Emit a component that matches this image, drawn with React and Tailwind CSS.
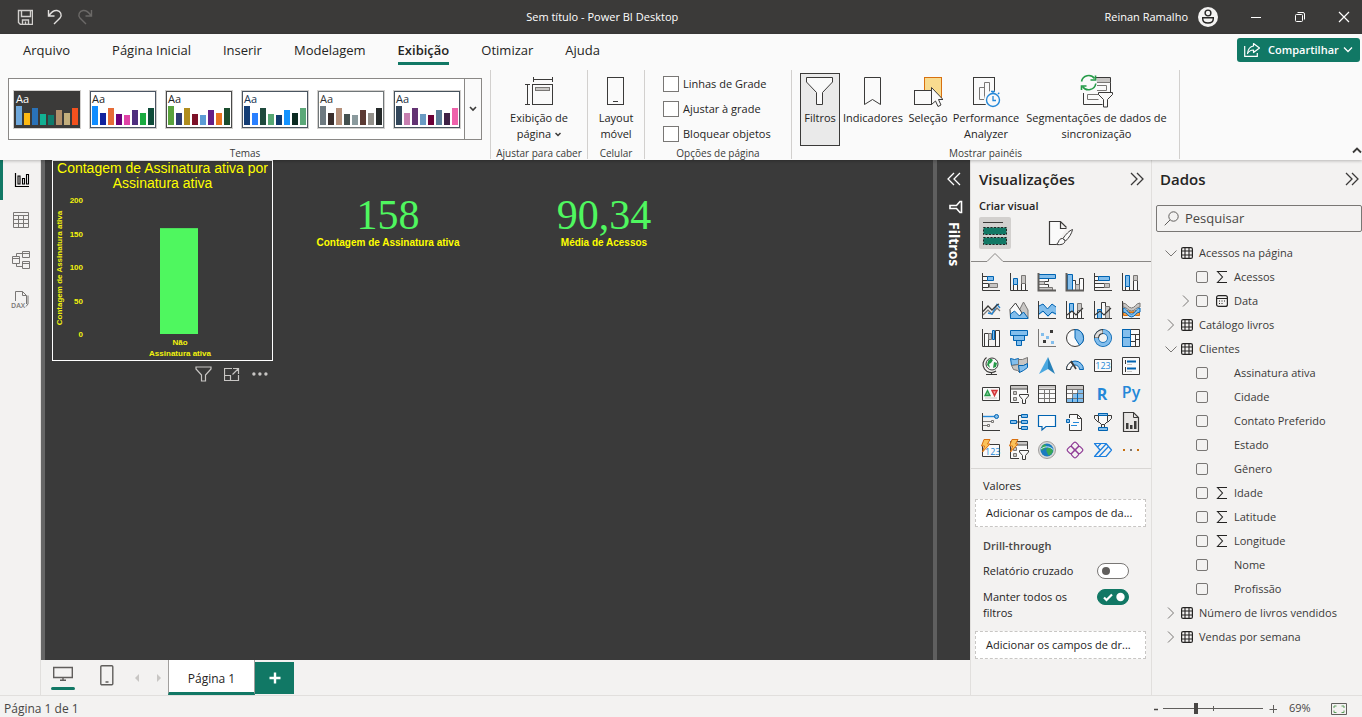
import React from 'react';

const K = '#3b3a39';
const B = '#0063b1';
const BF = '#83beec';
const G = '#797775';
const GF = '#c8c6c4';
const W = '#fafafa';

function Svg({ w = 20, h = 20, className = '', children }) {
  return (
    <svg
      width={w}
      height={h}
      viewBox={`0 0 ${w} ${h}`}
      fill="none"
      className={`shrink-0 ${className}`}
      aria-hidden="true"
    >
      {children}
    </svg>
  );
}

/* ---------- Title bar ---------- */

function TitleBar() {
  return (
    <header className="flex h-[34px] shrink-0 items-center bg-[#3b3a39] text-[11px] text-white">
      <div className="flex w-[100px] items-center gap-3.5 pl-[17px]">
        <button aria-label="Salvar">
          <Svg w={16} h={16}>
            <path d="M1.5 1.5h14v14h-12l-2-2z" stroke="#d2d0ce" strokeWidth="1.4" />
            <path d="M4.5 1.5v6h9v-6M5.5 15v-4h6v4M8.5 12.5v2.5" stroke="#d2d0ce" strokeWidth="1.4" />
          </Svg>
        </button>
        <button aria-label="Desfazer">
          <Svg w={16} h={16}>
            <path d="M1.5 1v6h6M2 6.5C4 3.5 7 1.2 10 1.5C13.5 2 15.5 6 13 9L7 15" stroke="#e1dfdd" strokeWidth="1.4" />
          </Svg>
        </button>
        <button aria-label="Refazer">
          <Svg w={16} h={16}>
            <path d="M14.5 1v6h-6M14 6.5C12 3.5 9 1.2 6 1.5C2.5 2 .5 6 3 9L9 15" stroke="#6b6967" strokeWidth="1.4" />
          </Svg>
        </button>
      </div>
      <h1 className="flex-1 text-center">Sem título - Power BI Desktop</h1>
      <div className="flex items-center pr-3">
        <span>Reinan Ramalho</span>
        <Svg w={20} h={20} className="ml-2.5">
          <circle cx="10" cy="10" r="10" fill="#f3f2f1" />
          <circle cx="10" cy="6" r="2.9" stroke="#252423" strokeWidth="1.4" />
          <path d="M4.7 10.7h10.600v1c0 2.800-2.200 4.300-5.300 4.300s-5.300-1.500-5.300-4.300z" stroke="#252423" strokeWidth="1.4" />
        </Svg>
        <button aria-label="Minimizar" className="ml-8">
          <Svg w={12} h={12}><path d="M1 6.5h10" stroke="#fff" /></Svg>
        </button>
        <button aria-label="Restaurar" className="ml-8">
          <Svg w={12} h={12}>
            <rect x="1.5" y="3.5" width="7" height="7" rx="1" stroke="#fff" />
            <path d="M3.5 1.5h5.500a1.500 1.500 0 0 1 1.500 1.500v5.500" stroke="#fff" />
          </Svg>
        </button>
        <button aria-label="Fechar" className="ml-8">
          <Svg w={12} h={12}><path d="M1 1l10 10M11 1L1 11" stroke="#fff" strokeWidth="1.2" /></Svg>
        </button>
      </div>
    </header>
  );
}

/* ---------- Ribbon ---------- */

const TABS = ['Arquivo', 'Página Inicial', 'Inserir', 'Modelagem', 'Exibição', 'Otimizar', 'Ajuda'];

const THEMES = [
  { dark: true, ink: '#ffffff', edge: '#3b3a39', bars: ['#6fa8dc', '#fdb913', '#2a72b8', '#12b093', '#0f7b6c', '#b18f6a', '#c3ae7c', '#f4511e'] },
  { ink: '#252423', edge: '#4b5563', bars: ['#118dff', '#12239e', '#e66c37', '#6b007b', '#e044a7', '#4f2f7f', '#1aab40', '#0f4c3a'] },
  { ink: '#252423', edge: '#4a4a4a', bars: ['#5aa23c', '#2f3c73', '#b08d1e', '#7d1128', '#5b9bd5', '#641e87', '#e8731f', '#1b4d2e'] },
  { ink: '#16324f', edge: '#4a5560', bars: ['#153e75', '#2a80ff', '#1f4a3d', '#57a773', '#0f3a6d', '#1493ff', '#0c2b22', '#5ba878'] },
  { ink: '#333333', edge: '#707678', bars: ['#6e7a80', '#3a2e2c', '#b5907a', '#44504f', '#8a9a9d', '#5c3a33', '#93908a', '#262a2a'] },
  { ink: '#26333f', edge: '#46525c', bars: ['#33475b', '#c77fb0', '#633372', '#6a9bc3', '#6b0036', '#5a7d98', '#3f2145', '#ee62ab'] },
];
const BAR_HEIGHTS = [19, 12, 17, 11, 10, 15, 12, 17];

function ThemeThumb({ theme }) {
  return (
    <button aria-label="Tema" className="outline outline-1 outline-[#d2d0ce]">
      <svg width="66" height="37" viewBox="0 0 66 37" className="block">
        <rect x=".5" y=".5" width="65" height="36" fill={theme.dark ? '#3b3a39' : '#ffffff'} stroke={theme.edge} />
        <text x="2" y="12" fontSize="11" fill={theme.ink}>Aa</text>
        {theme.bars.map((c, i) => (
          <rect key={i} x={2 + i * 8} y={34 - BAR_HEIGHTS[i]} width="6" height={BAR_HEIGHTS[i]} fill={c} />
        ))}
      </svg>
    </button>
  );
}

function Group({ label, className = '', children }) {
  return (
    <section className={`flex h-[89px] shrink-0 flex-col border-r border-[#d2d0ce] ${className}`}>
      <div className="flex flex-1 justify-center">{children}</div>
      <h2 className="h-[12px] text-center text-[10px] leading-[12px] whitespace-nowrap text-[#3b3a39]">{label}</h2>
    </section>
  );
}

function BigButton({ icon, lines, active, className = '' }) {
  return (
    <button
      className={`flex h-[73px] flex-col items-center border pt-[3px] leading-[16px] whitespace-nowrap ${
        active ? 'border-[#3b3a39] bg-[#eaeaea]' : 'border-transparent'
      } ${className}`}
    >
      <span className="flex h-[33px] items-start">{icon}</span>
      {lines.map((l, i) => (
        <span key={i}>{l}</span>
      ))}
    </button>
  );
}

const PageViewIcon = (
  <Svg w={30} h={30}>
    <path d="M9 2.5h20M9.5 0v5M28.5 0v5M3.5 8v20M1 7.5h5M1 27.5h5" stroke={K} />
    <rect x="8.5" y="7.5" width="20" height="20" stroke={K} />
    <rect x="11.5" y="10.5" width="14" height="3" fill={GF} stroke={G} />
  </Svg>
);
const MobileIcon = (
  <Svg w={18} h={30}>
    <rect x=".5" y=".5" width="16" height="27" stroke={K} />
    <path d="M6 24.5h5" stroke={K} />
  </Svg>
);
const FilterBigIcon = (
  <Svg w={28} h={30}>
    <path d="M.5 .5h26v4.500L16.500 15.500v12h-6v-12L.5 5z" fill={W} stroke={K} />
  </Svg>
);
const BookmarkIcon = (
  <Svg w={18} h={30}>
    <path d="M.5 .5h16v27l-8-5-8 5z" fill={W} stroke={K} />
  </Svg>
);
const SelectionIcon = (
  <Svg w={30} h={32}>
    <rect x="11.5" y=".5" width="17" height="20" fill="#f8db8f" stroke="#d8700f" />
    <rect x="1.5" y="13.5" width="17" height="14" fill={W} stroke={K} />
    <path d="M18.5 10.500v17l4-3.500 2.500 5.500 3-1.500-2.500-5.500h4.500z" fill={W} stroke={K} />
  </Svg>
);
const PerfIcon = (
  <Svg w={30} h={32}>
    <rect x="2.5" y=".5" width="21" height="27" stroke={K} fill={W} />
    <path d="M8.5 10.5h5v12h-5zM13.5 5.5h5v17h-5z" fill={W} stroke={G} />
    <circle cx="22" cy="22.5" r="9" fill={W} />
    <circle cx="22" cy="23" r="6.5" stroke="#2488d8" strokeWidth="1.4" />
    <path d="M22 19v4.500h3M20 14.500h4M22 14.500v2M27 17l1.300-1.300" stroke="#2488d8" strokeWidth="1.3" />
  </Svg>
);
const SyncSlicerIcon = (
  <Svg w={36} h={32} className="overflow-visible">
    <path d="M4.5 16v11.500h19M31.500 15V.5H15" stroke={K} />
    <rect x="17" y="1" width="14" height="4" fill={GF} />
    <path d="M17 5.500h14.500M18 8.500h9.500v5H18M22 17.500H8.500v5h11" stroke={G} />
    <path d="M19.500 15.500h14v2l-5 5v7.500h-4v-7.500l-5-5z" fill={W} stroke={K} />
    <circle cx="9.5" cy="6" r="8.5" fill={W} />
    <path d="M2.500 4.500A7.300 7.300 0 0 1 15.500 1.500M16.800 6.500A7.300 7.300 0 0 1 3.500 9.500" stroke="#259b48" strokeWidth="1.6" />
    <path d="M16.500 -1.500v4.500h-5M2.500 13v-4h5" stroke="#259b48" strokeWidth="1.6" />
  </Svg>
);

function Ribbon() {
  return (
    <div className="relative z-10 flex h-[126px] shrink-0 flex-col bg-[#fafafa] text-[#252423] shadow-[0_1px_3px_rgba(0,0,0,0.25)]">
      <div className="flex h-[36px] items-start justify-between pr-0.5">
        <nav className="flex text-[13px]">
          {TABS.map((t, i) => (
            <button
              key={t}
              className={`flex h-[31px] flex-col items-center px-4 pt-[6px] leading-[20px] ${i === 0 ? 'mr-2.5 ml-[7px]' : ''} ${
                t === 'Exibição' ? 'font-semibold' : ''
              }`}
            >
              {t}
              {t === 'Exibição' && <span className="mt-[2px] h-[3px] w-full bg-[#117865]" />}
            </button>
          ))}
        </nav>
        <button className="mt-1 flex h-[24px] w-[123px] items-center rounded-[3px] bg-[#117865] pl-[7px] text-[11px] font-semibold text-white">
          <Svg w={16} h={16}>
            <path d="M.7 4v10.300h12.600V11" stroke="#fff" strokeWidth="1.2" />
            <path d="M9.5 1.5l6 4.500-6 4.500V8C7 8 5 9 3.500 11.500 4 7 6 4.500 9.500 4z" stroke="#fff" strokeWidth="1.2" strokeLinejoin="round" />
          </Svg>
          <span className="ml-2">Compartilhar</span>
          <Svg w={10} h={8} className="ml-1"><path d="M1 1.5l4 4 4-4" stroke="#fff" strokeWidth="1.3" /></Svg>
        </button>
      </div>

      <div className="flex items-start text-[11px]">
        <Group label="Temas" className="w-[491px]">
          <div className="mt-2 flex h-[62px] border border-[#8a8886] bg-white">
            <div className="flex items-center gap-2.5 pr-[4px] pl-[5px]">
              {THEMES.map((t, i) => (
                <ThemeThumb key={i} theme={t} />
              ))}
            </div>
            <button aria-label="Mais temas" className="flex w-[17px] items-center justify-center border-l border-[#8a8886] bg-[#fafafa]">
              <Svg w={8} h={6}><path d="M1 1l3 3 3-3" stroke={K} strokeWidth="1.6" /></Svg>
            </button>
          </div>
        </Group>
        <Group label="Ajustar para caber" className="w-[97px]">
          <BigButton
            className="mt-[3px]"
            icon={PageViewIcon}
            lines={[
              'Exibição de',
              <span className="flex items-center gap-1">
                página
                <Svg w={6} h={5}><path d="M.5 1L3 3.500 5.500 1" stroke={K} strokeWidth="1.5" /></Svg>
              </span>,
            ]}
          />
        </Group>
        <Group label="Celular" className="w-[57px]">
          <BigButton className="mt-[3px]" icon={MobileIcon} lines={['Layout', 'móvel']} />
        </Group>
        <Group label="Opções de página" className="w-[147px]">
          <div className="flex flex-1 flex-col gap-[9px] pt-[6px] pl-[18px]">
            {['Linhas de Grade', 'Ajustar à grade', 'Bloquear objetos'].map((t) => (
              <label key={t} className="flex h-4 items-center gap-1 whitespace-nowrap">
                <input type="checkbox" className="size-4 shrink-0 appearance-none border border-[#797775] bg-white" />
                {t}
              </label>
            ))}
          </div>
        </Group>
        <Group label="Mostrar painéis" className="w-[388px]">
          <div className="mt-[3px] flex flex-1 gap-1 pl-2">
            <BigButton active className="w-10" icon={FilterBigIcon} lines={['Filtros']} />
            <BigButton className="w-[58px]" icon={BookmarkIcon} lines={['Indicadores']} />
            <BigButton className="w-[44px]" icon={SelectionIcon} lines={['Seleção']} />
            <BigButton className="w-[64px]" icon={PerfIcon} lines={['Performance', 'Analyzer']} />
            <BigButton className="w-[149px]" icon={SyncSlicerIcon} lines={['Segmentações de dados de', 'sincronização']} />
          </div>
        </Group>
        <button aria-label="Recolher faixa de opções" className="mt-[76px] ml-auto">
          <Svg w={10} h={8}><path d="M1 6.500l4-4 4 4" stroke={K} strokeWidth="1.8" /></Svg>
        </button>
      </div>
    </div>
  );
}

/* ---------- Left navigation ---------- */

function LeftNav() {
  return (
    <nav className="flex w-[41px] shrink-0 flex-col border-r border-[#e1dfdd] bg-[#f3f2f1]">
      <button aria-label="Exibição de relatório" className="flex h-10 items-center justify-center border-l-3 border-[#117865]">
        <Svg w={16} h={16}>
          <path d="M1.5 1v13.500H15" stroke="#000" strokeWidth="1.2" />
          <path d="M4 4h2v8H4zM8.500 6.500h2V12h-2zM12.500 2.500h2V12h-2z" stroke="#000" strokeWidth="1.1" />
        </Svg>
      </button>
      <button aria-label="Exibição de tabela" className="flex h-10 items-center justify-center pl-0.5">
        <Svg w={18} h={16}>
          <path d="M1.5 .5h15v15h-15zM1.500 3.500h15M1.500 7.500h15M1.500 11.500h15M6.500 3.500v12M11.500 3.500v12" stroke={G} />
        </Svg>
      </button>
      <button aria-label="Exibição de modelo" className="flex h-10 items-center justify-center pl-0.5">
        <Svg w={20} h={20}>
          <path d="M1.500 6.500h7v7h-7zM11.500 1.500h7v6h-7zM11.500 11.500h7v7h-7zM1.500 8.500h7M11.500 3.500h7M11.500 13.500h7M11 3.500H5.500v3M5.500 13.500v3H11" stroke={G} />
        </Svg>
      </button>
      <button aria-label="Exibição de consulta DAX" className="flex h-10 items-center justify-center">
        <Svg w={20} h={20}>
          <path d="M5.500 11V1.500h7l4 4V14M12.500 1.500v4h4M18 5.500v8.500l-2 2.500" stroke={G} />
          <text x="1" y="18" fontSize="7" fontWeight="600" fill={G}>DAX</text>
        </Svg>
      </button>
    </nav>
  );
}

/* ---------- Report canvas ---------- */

function BarChart() {
  const ticks = [200, 150, 100, 50, 0];
  return (
    <figure className="absolute top-0 left-[7px] h-[201px] w-[221px] border border-white font-['Liberation_Sans',sans-serif]">
      <figcaption className="text-center text-[14px] leading-[15px] text-[#ffff00]">
        Contagem de Assinatura ativa por Assinatura ativa
      </figcaption>
      <svg width="219" height="169" viewBox="0 0 219 169" className="block" fill="#f2f20d" fontSize="8" fontWeight="bold">
        {ticks.map((t) => (
          <text key={t} x="30" y={146 - (t / 200) * 134} textAnchor="end">{t}</text>
        ))}
        <text transform="translate(9 77) rotate(-90)" textAnchor="middle">Contagem de Assinatura ativa</text>
        <rect x="107" y={143 - (158 / 200) * 134} width="38" height={(158 / 200) * 134} fill="#4ff75f" />
        <text x="127" y="154" textAnchor="middle">Não</text>
        <text x="127" y="165" textAnchor="middle">Assinatura ativa</text>
      </svg>
    </figure>
  );
}

function Card({ value, label, className }) {
  return (
    <div className={`absolute flex flex-col items-center whitespace-nowrap ${className}`}>
      <span className="font-['Liberation_Serif',serif] text-[42px] leading-[42px] text-[#4ff75f]">{value}</span>
      <span className="font-['Liberation_Sans',sans-serif] text-[10px] leading-[14px] font-bold text-[#ffff00]">{label}</span>
    </div>
  );
}

function Canvas() {
  return (
    <main className="relative min-w-0 flex-1 border-l-4 border-[#666666] bg-[#3a3a3a]">
      <BarChart />
      <div className="absolute top-[206px] left-[150px] flex gap-3">
        <button aria-label="Filtros do visual">
          <Svg w={17} h={16}><path d="M1 1h15v2l-5.500 6v6h-4V9L1 3z" stroke="#c8c6c4" strokeWidth="1.2" /></Svg>
        </button>
        <button aria-label="Modo de foco">
          <Svg w={16} h={16}>
            <path d="M8 2.500H.5v12h14V9M.5 9.500h6v5M9 2.500h5.500V8M14.500 2.500L8.500 8.500" stroke="#c8c6c4" strokeWidth="1.2" />
          </Svg>
        </button>
        <button aria-label="Mais opções">
          <Svg w={17} h={16}>
            <circle cx="1.900" cy="8" r="1.700" fill="#c8c6c4" />
            <circle cx="7.900" cy="8" r="1.700" fill="#c8c6c4" />
            <circle cx="13.900" cy="8" r="1.700" fill="#c8c6c4" />
          </Svg>
        </button>
      </div>
      <Card value="158" label="Contagem de Assinatura ativa" className="top-[34px] left-[243px] w-[200px]" />
      <Card value="90,34" label="Média de Acessos" className="top-[34px] left-[459px] w-[200px]" />
    </main>
  );
}

function Chevrons({ left, color = K }) {
  return (
    <Svg w={14} h={14}>
      <path d={left ? 'M7 1L1 7l6 6M13 1L7 7l6 6' : 'M1 1l6 6-6 6M7 1l6 6-6 6'} stroke={color} strokeWidth="1.3" />
    </Svg>
  );
}

function FiltersStrip() {
  return (
    <aside className="flex w-[37px] shrink-0 flex-col items-center gap-3.5 border-l-4 border-[#5f5f5f] bg-[#3a3a3a] pt-3">
      <button aria-label="Expandir filtros"><Chevrons left color="#ffffff" /></button>
      <Svg w={14} h={14} className="ml-1">
        <path d="M12.500 1.500v11h-1.500L7.500 8.500H1v-3h6.500L11 1.500z" stroke="#fff" strokeWidth="1.6" />
      </Svg>
      <h2 className="-mt-1.5 text-[14px] leading-[16px] font-bold text-white [writing-mode:vertical-rl]">Filtros</h2>
    </aside>
  );
}

/* ---------- Visualizations gallery ---------- */

const AX = <path d="M1.5 1v17.500H19" stroke={K} />;
const TXT = { fontFamily: 'Open Sans, sans-serif', fill: '#2488d8' };
const BOLT = <path d="M3 -.5h6L6.500 4H9L1.500 12 3.500 6H.5z" fill="#fbc25a" stroke="#d8700f" />;
const SLICER = (
  <>
    <path d="M10 18.500H1.500v-17h17V9" fill={W} stroke={K} />
    <rect x="2" y="2" width="16" height="2.5" fill={GF} />
    <path d="M2 5h16.500" stroke={K} />
    <path d="M4.500 7.500h3v3h-3zM4.500 13.500h3v3h-3z" fill={GF} stroke={G} />
    <path d="M10.500 10.500h9v1.500l-3 3.500v4h-3v-4l-3-3.500z" fill={W} stroke={K} />
  </>
);

const VISUALS = [
  ['Gráfico de barras empilhadas', <>
    <path d="M1.500 4.500h5v4h-5zM1.500 11.500h6v4h-6z" fill={W} stroke={K} />
    <path d="M6.500 4.500h6v4h-6z" fill={BF} stroke={B} />
    <path d="M8.500 11.500h8v4h-8z" fill={GF} stroke={G} />{AX}</>],
  ['Gráfico de colunas empilhadas', <>
    <path d="M4.500 12.500h4v6h-4zM12.500 11.500h4v7h-4z" fill={W} stroke={K} />
    <path d="M4.500 6.500h4v6h-4z" fill={BF} stroke={B} />
    <path d="M12.500 3.500h4v8h-4z" fill={GF} stroke={G} />{AX}</>],
  ['Gráfico de barras clusterizado', <>
    <path d="M1.500 6.500h10v3h-10zM1.500 12.500h10v5h-10z" fill={W} stroke={K} />
    <path d="M1.500 9.500h6v3h-6zM1.500 15.500h14v3h-14z" fill={GF} stroke={G} />
    <path d="M1.500 2.500h17v4h-17z" fill={BF} stroke={B} />
    <path d="M1.500 1v17.500H19" stroke="#605e5c" strokeWidth="2" /></>],
  ['Gráfico de colunas clusterizado', <>
    <path d="M7.500 8.500h3v10h-3zM14.500 6.500h4v12h-4z" fill={W} stroke={K} />
    <path d="M10.500 12.500h4v6h-4z" fill={GF} stroke={G} />
    <path d="M2.500 2.500h5v16h-5z" fill={BF} stroke={B} />
    <path d="M1.500 1v17.500H19" stroke="#605e5c" strokeWidth="2" /></>],
  ['Gráfico de barras 100%', <>
    <path d="M1.500 4.500h4v4h-4zM1.500 11.500h10v4h-10z" fill={W} stroke={K} />
    <path d="M5.500 4.500h11v4h-11z" fill={BF} stroke={B} />
    <path d="M11.500 11.500h5v4h-5z" fill={GF} stroke={G} />{AX}</>],
  ['Gráfico de colunas 100%', <>
    <path d="M4.500 14.500h4v4h-4zM12.500 8.500h4v10h-4z" fill={W} stroke={K} />
    <path d="M4.500 3.500h4v11h-4z" fill={BF} stroke={B} />
    <path d="M12.500 3.500h4v5h-4z" fill={GF} stroke={G} />{AX}</>],

  ['Gráfico de linhas', <>
    <path d="M2 15l5-5 4 4 5-6 3 3" stroke={G} strokeWidth="1.2" />
    <path d="M7 13l4 1 5-9.500 3 3.500" stroke="#2488d8" strokeWidth="1.3" />
    <path d="M2 11.500l5-5.500 4 4 5-5 2-1" stroke={K} strokeWidth="1.3" />{AX}</>],
  ['Gráfico de área', <>
    <path d="M14.500 2l4.500 8v8.500H6z" fill={GF} stroke={G} />
    <path d="M1 9.500L6.500 3 13 13l-4 5H1.500z" fill={W} stroke={K} />
    <path d="M1.500 14l4-3 5 5 4-4 4.500 6v.5h-17.500z" fill={BF} stroke={B} /></>],
  ['Gráfico de áreas empilhadas', <>
    <path d="M2 6l4-2 4.500 5L15 4l4 3v8l-4-2-4 4-5-5-4 3z" fill={BF} />
    <path d="M2 6l4-2 4.500 5L15 4l4 3M2 14l4-3 5 5 4-4 4 2" stroke={B} />{AX}</>],
  ['Linhas e colunas empilhadas', <>
    <path d="M4.500 9.500h4v9h-4zM12.500 9.500h4v9h-4z" fill={W} stroke={K} />
    <path d="M4.500 3.500h4v8h-4z" fill={BF} stroke={B} />
    <path d="M12.500 3.500h4v7h-4z" fill={GF} stroke={G} />
    <path d="M2 15l5-4 4 4 7-7" stroke={K} strokeWidth="1.2" />{AX}</>],
  ['Linhas e colunas clusterizadas', <>
    <path d="M8.500 2.500h4v16h-4z" fill={W} stroke={K} />
    <path d="M12.500 6.500h4v12h-4z" fill={GF} stroke={G} />
    <path d="M4.500 9.500h4v9h-4z" fill={BF} stroke={B} />
    <path d="M2 15l5-4 4 4 7-7" stroke={K} strokeWidth="1.2" />{AX}</>],
  ['Gráfico de faixas', <>
    <path d="M2.500 10.500h4v5h-4zM14.500 10.500h4v5h-4zM8 9.500h5v3H8z" fill="#f2a04a" stroke="#d8700f" />
    <path d="M2 8c4 0 5 6 8.500 6S15 8 19 8v4c-4 0-5 5-8.500 5S6 12 2 12z" fill={BF} stroke={B} />
    <path d="M2 3c4 0 5 5 8.500 5S15 3 19 3v4c-4 0-5 4-8.500 4S6 7 2 7z" fill={GF} stroke={G} />{AX}</>],

  ['Gráfico de cascata', <>
    <path d="M3.500 5.500h4v13h-4zM14.500 2.500h4v16h-4z" fill={W} stroke={K} />
    <path d="M7.500 5.500h3v6h-3z" fill={GF} stroke={G} />
    <path d="M11.500 2.500h2v9h-2z" fill={BF} stroke={B} />{AX}</>],
  ['Funil', <>
    <path d="M1.500 2.500h17v5h-17zM4.500 7.500h11v5h-11zM7.500 12.500h5v5h-5z" fill={BF} stroke={B} /></>],
  ['Gráfico de dispersão', <>
    <path d="M13 2h3v3h-3zM6 12h3v3H6z" fill={K} />
    <path d="M4 5h3v3H4zM9 8h3v3H9zM14 13h3v3h-3z" fill={BF} />
    <path d="M1.500 1v17.500H19" stroke={G} /></>],
  ['Gráfico de pizza', <>
    <circle cx="10" cy="10" r="8.5" fill={W} stroke={K} />
    <path d="M10 1.500A8.500 8.500 0 0 1 14.500 17.200L10 10z" fill={BF} stroke={B} /></>],
  ['Gráfico de rosca', <>
    <circle cx="10" cy="10" r="6.5" stroke={B} strokeWidth="5" />
    <circle cx="10" cy="10" r="6.5" stroke={BF} strokeWidth="3.4" />
    <path d="M3.500 10A6.500 6.500 0 0 1 10 3.500" stroke={K} strokeWidth="5" />
    <path d="M3.500 9.500A6.500 6.500 0 0 1 9.500 3.500" stroke="#e1dfdd" strokeWidth="3.2" /></>],
  ['Treemap', <>
    <path d="M1.500 1.500h17v17h-17z" fill={W} stroke={K} />
    <path d="M9.500 6.500h9M14.500 6.500v12M9.500 13.500h5M14.500 11.500h4" stroke={K} />
    <path d="M1.500 1.500h8v8h-8zM1.500 9.500h8v9h-8z" fill={BF} stroke={B} /></>],

  ['Mapa', <>
    <circle cx="11" cy="8" r="6" fill={W} stroke={K} />
    <path d="M7 5c2-3 4-2 5-1l-2 3-2 1 1 4-3-3zM13 6l3 1-1 4-3 1z" fill="#259b48" />
    <path d="M5.500 1.500a8 8 0 0 0 9.500 13.500M10.500 16v2.500M5 18.500h11" stroke={K} strokeWidth="1.2" /></>],
  ['Mapa coroplético', <>
    <path d="M1.500 2.500l4 1 4-1v6l-7 1z" fill={BF} stroke={B} />
    <path d="M9.500 3.500h4l5-2v6l-4 2h-5z" fill={GF} stroke={G} />
    <path d="M2.500 9.500l7-1 1 8-2-2-4-1z" fill={GF} stroke={G} />
    <path d="M9.500 9.500h5l4-2v4l-4 3-4 2z" fill={BF} stroke={B} /></>],
  ['Mapa do Azure', <>
    <path d="M11 1L2 18l9-5z" fill="#4aa8e0" />
    <path d="M11 1l7 17-7-5z" fill="#2680b8" /></>],
  ['Medidor', <>
    <path d="M1.500 13.500a8.500 8.500 0 0 1 17 0h-4a4.500 4.500 0 0 0-9 0z" fill={BF} stroke={B} />
    <path d="M1.500 13.500A8.500 8.500 0 0 1 6 6l2 3.500a4.500 4.500 0 0 0-2.500 4z" fill={W} stroke={K} />
    <path d="M6 5l5 8" stroke={K} strokeWidth="1.6" /></>],
  ['Cartão', <>
    <path d="M1.500 3.500h17v12h-17z" fill={W} stroke={K} />
    <text x="10" y="13" fontSize="9" textAnchor="middle" {...TXT}>123</text></>],
  ['Cartão de várias linhas', <>
    <path d="M1.500 1.500h17v17h-17z" fill={W} stroke={K} />
    <path d="M4.500 4v4M4.500 11v5" stroke={K} />
    <path d="M6 5.500h9M6 12.500h9" stroke={B} strokeWidth="2" />
    <path d="M6 8.500h5M6 15.500h5" stroke={GF} /></>],

  ['KPI', <>
    <path d="M1.500 3.500h17v13h-17z" fill={W} stroke={K} />
    <path d="M4 11.500l2.500-5 2.500 5z" fill="#7fc795" stroke="#259b48" strokeWidth="1.3" />
    <path d="M11 6.500h5l-2.500 5z" fill="#f6a5a5" stroke="#d13438" strokeWidth="1.5" />
    <path d="M4 14h12" stroke={GF} /></>],
  ['Segmentação de dados', SLICER],
  ['Tabela', <>
    <path d="M1.500 1.500h17v17h-17z" fill={W} stroke={K} />
    <rect x="2" y="2" width="16" height="2.5" fill={GF} />
    <path d="M1.500 5.500h17M1.500 9.500h17M1.500 14.500h17M7.500 5v13M12.500 5v13" stroke={G} />
    <path d="M1.500 1.500h17v17h-17z" stroke={K} /></>],
  ['Matriz', <>
    <path d="M1.500 1.500h17v17h-17z" fill={W} />
    <path d="M13 5h5.500v13.500H2V14h5v-4h6z" fill={BF} />
    <path d="M2 2h16v3H2z" fill={GF} />
    <path d="M1.500 5.500h17M1.500 9.500h17M1.500 14.500h17M7.500 5v13M12.500 5v13" stroke={G} />
    <path d="M7.500 18v-4M12.500 18V9" stroke={B} />
    <path d="M1.500 1.500h17v17h-17z" stroke={K} /></>],
  ['Visual do script R', <text x="9" y="16" fontSize="16" fontWeight="bold" textAnchor="middle" {...TXT}>R</text>],
  ['Visual do Python', <text x="10" y="14" fontSize="16" fontWeight="600" textAnchor="middle" {...TXT}>Py</text>],

  ['Influenciadores principais', <>
    <path d="M2 4.500h12" stroke="#2488d8" strokeWidth="1.4" />
    <circle cx="15.5" cy="4.5" r="2" fill={BF} stroke={B} />
    <path d="M2 9.500h8M2 13.500h4" stroke={G} />
    <path d="M10.500 8.500h2v2h-2zM6.500 12.500h2v2h-2z" stroke={G} />
    <path d="M1.500 1v17.500H19" stroke={K} /></>],
  ['Árvore hierárquica', <>
    <path d="M7 10h6M9.500 3.500v13M9.500 3.500H13M9.500 16.500H13" stroke={K} />
    <path d="M1.500 8.500h6v3h-6zM12.500 2.500h6v3h-6zM12.500 8.500h6v3h-6zM12.500 14.500h6v3h-6z" fill={BF} stroke={B} /></>],
  ['P e R', <path d="M1.500 3.500h17v11H9L5 18v-3.500H1.500z" fill={W} stroke={B} strokeWidth="1.2" />],
  ['Narrativa inteligente', <>
    <path d="M4.500 6V2.500h8l4 4v12H4.500V12" fill={W} stroke={K} />
    <path d="M12.500 2.500v4h4" stroke={K} />
    <path d="M1.500 7.500h3v3h-3z" fill={BF} stroke={B} />
    <path d="M8 10.500h6M6 13.500h6" stroke="#2488d8" /></>],
  ['Metas', <>
    <path d="M5.500 1.500h9v8l-3 3h-3l-3-3z" fill={W} stroke={K} />
    <path d="M5 3.500H1.500v3l4 4M15 3.500h3.500v3l-4 4M8.500 12.500v3M11.500 12.500v3" stroke={K} />
    <path d="M5.500 1.500h9v2h-9zM5.500 15.500h9v3h-9z" fill={BF} stroke={B} /></>],
  ['Relatório paginado', <>
    <path d="M2.500 .5h10l5 5v14h-15z" fill="#e8e6e4" stroke={K} strokeWidth="1.2" />
    <path d="M12.500 .5v5h5" stroke={K} />
    <path d="M5 11h2.500v6H5zM9 13h2.500v4H9zM13 9h2.500v8H13z" fill={K} /></>],

  ['Cartão (novo)', <>
    <path d="M1.500 4.500h17v12h-17z" fill={W} stroke={K} />
    <text x="4" y="15" fontSize="9" {...TXT}>123</text>{BOLT}</>],
  ['Segmentação de dados (nova)', <>{SLICER}{BOLT}</>],
  ['ArcGIS', <>
    <circle cx="10" cy="10" r="8.5" fill="#d9d9d9" stroke="#a19f9d" />
    <circle cx="10" cy="10" r="6.5" fill="#1a7bbf" />
    <path d="M6 5c2-1 4 0 3 2s-3 2-4 4c-1-2-1-4 1-6zM10 8c3-1 5 0 6 3-1 3-3 5-5 4 0-2-3-4-1-7z" fill="#39a852" />
    <path d="M4 9c4-3 9-3 12.500 1" stroke="#cfe8f7" /></>],
  ['Power Apps', <g transform="rotate(45 10 10)" stroke="#8f3b96" strokeWidth="1.2">
    <rect x="4" y="4" width="6" height="6" rx="1.6" />
    <rect x="10" y="4" width="6" height="6" rx="1.6" />
    <rect x="4" y="10" width="6" height="6" rx="1.6" />
    <rect x="10" y="10" width="6" height="6" rx="1.6" />
  </g>],
  ['Power Automate', <path d="M1.500 3.500H13l5.500 6.500-5.500 6.500H1.500L7 10zM2 16L13 4M6 16.500L15.500 6.500M4.500 7L8 3.500" stroke="#1a7fe0" strokeWidth="1.2" strokeLinejoin="round" />],
  ['Obter mais visuais', <>
    <path d="M2 9h2v2H2z" fill="#c8700f" />
    <path d="M9 9h2v2H9z" fill="#797775" />
    <path d="M16 9h2v2h-2z" fill="#c8700f" /></>],
];

function FieldWell({ text }) {
  return (
    <div className="mr-[5px] ml-1 flex h-7 items-center border border-dashed border-[#c8c6c4] bg-white px-2.5 text-[11px] whitespace-nowrap">
      <span>{text}</span>
    </div>
  );
}

function Toggle({ id, on }) {
  return (
    <span className="grid h-4 w-8 shrink-0 items-center">
      <input
        id={id}
        type="checkbox"
        role="switch"
        defaultChecked={on}
        className="col-start-1 row-start-1 h-4 w-8 appearance-none rounded-full border border-[#797775] bg-white checked:border-[#117865] checked:bg-[#117865]"
      />
      <span className="pointer-events-none col-start-1 row-start-1">
        {on ? (
          <Svg w={32} h={16}>
            <path d="M7 8.500l2.500 2.500L15 5.500" stroke="#fff" strokeWidth="2.2" />
            <circle cx="23.5" cy="8" r="4.2" fill="#fff" />
          </Svg>
        ) : (
          <Svg w={32} h={16}><circle cx="9" cy="8" r="4" fill="#605e5c" /></Svg>
        )}
      </span>
    </span>
  );
}

function VisualizationsPane() {
  return (
    <aside className="flex w-[182px] shrink-0 flex-col border-x border-[#e1dfdd] bg-[#f3f2f1] text-[11px] text-[#252423]">
      <div className="flex h-10 items-center justify-between pr-[7px] pb-0.5 pl-2">
        <h2 className="text-[15px] font-semibold">Visualizações</h2>
        <button aria-label="Recolher visualizações"><Chevrons /></button>
      </div>
      <p className="h-[17px] pl-2 leading-[12px] font-semibold">Criar visual</p>
      <div className="flex items-center gap-[37px] pl-2">
        <button aria-label="Criar visual" className="flex size-8 items-center justify-center rounded-[2px] bg-[#d2d0ce]">
          <Svg w={26} h={26}>
            <path d="M1 2.500h20" stroke={K} />
            <path d="M1.500 7.500h23v7h-23zM1.500 17.500h23v7h-23z" fill="#117865" stroke="#252423" strokeDasharray="2 1.5" />
          </Svg>
        </button>
        <button aria-label="Formatar visual">
          <Svg w={26} h={26}>
            <path d="M8.500 24.500h-7v-23h11l6 6M12.500 1.500v7h6" fill="#fafafa" stroke={K} strokeWidth="1.2" />
            <path d="M24.500 9.500c-3 1-7 5-9.500 9l2.500 2.500c3.500-3 6.500-8 7-11.500z" fill={W} stroke={K} />
            <path d="M14.500 18.500c-2.500 0-3.500 1.500-4 3.500l-2 2.500c4 .5 8.500 0 8.500-4z" fill={W} stroke={K} />
          </Svg>
        </button>
      </div>
      <div className="flex items-end pt-[3px]">
        <span className="h-px w-4 bg-[#8a8886]" />
        <svg width="16" height="10" viewBox="0 0 16 10" className="block shrink-0" aria-hidden="true">
          <path d="M0 9.500L8 1.500l8 8" stroke="#8a8886" fill="none" />
        </svg>
        <span className="h-px flex-1 bg-[#8a8886]" />
      </div>
      <div className="grid grid-cols-[repeat(6,28px)] pt-[6px] pb-1 pl-1.5">
        {VISUALS.map(([name, art]) => (
          <button key={name} aria-label={name} title={name} className="flex h-7 items-center justify-center">
            <Svg className="overflow-visible">{art}</Svg>
          </button>
        ))}
      </div>
      <div className="border-t border-[#d8d6d4] pt-2">
        <h3 className="h-[22px] pl-3 leading-[18px]">Valores</h3>
        <FieldWell text="Adicionar os campos de da..." />
        <h3 className="mt-3 pl-3 leading-[14px] font-semibold text-[#484644]">Drill-through</h3>
        <div className="mt-2.5 flex items-start justify-between pr-[22px] pl-3 leading-[16px]">
          <label htmlFor="cross">Relatório cruzado</label>
          <Toggle id="cross" />
        </div>
        <div className="mt-2.5 flex items-start justify-between pr-[22px] pl-3 leading-[16px]">
          <label htmlFor="keep" className="w-[98px]">Manter todos os filtros</label>
          <Toggle id="keep" on />
        </div>
        <div className="mt-2.5">
          <FieldWell text="Adicionar os campos de dr..." />
        </div>
      </div>
    </aside>
  );
}

/* ---------- Data pane ---------- */

const TableIcon = (
  <Svg w={12} h={12}>
    <rect x=".6" y=".6" width="10.8" height="10.8" rx="1.5" stroke="#252423" strokeWidth="1.2" />
    <path d="M4 .5v11M8 .5v11M.5 4h11M.5 8h11" stroke="#252423" strokeWidth="1.1" />
  </Svg>
);
const SigmaIcon = (
  <Svg w={12} h={12}><path d="M11 .5H1.500l5 5.500-5 5.500H11" stroke="#252423" strokeWidth="1.1" /></Svg>
);
const CalendarIcon = (
  <Svg w={12} h={12}>
    <rect x=".6" y=".6" width="10.8" height="10.8" rx="2" stroke="#252423" strokeWidth="1.2" />
    <path d="M.5 3.500h11" stroke="#252423" />
    <path d="M3 6h1M5.500 6h1M8 6h1M3 8.500h1M5.500 8.500h1" stroke="#252423" />
  </Svg>
);

function Arrow({ open }) {
  return (
    <Svg w={12} h={12}>
      <path d={open ? 'M.5 3.500L6 9l5.500-5.500' : 'M3 .5L8.500 6l-5.500 5.500'} stroke="#797775" />
    </Svg>
  );
}

const TREE = [
  { table: 'Acessos na página', open: true },
  { field: 'Acessos', icon: SigmaIcon },
  { field: 'Data', icon: CalendarIcon, arrow: true },
  { table: 'Catálogo livros' },
  { table: 'Clientes', open: true },
  { field: 'Assinatura ativa' },
  { field: 'Cidade' },
  { field: 'Contato Preferido' },
  { field: 'Estado' },
  { field: 'Gênero' },
  { field: 'Idade', icon: SigmaIcon },
  { field: 'Latitude', icon: SigmaIcon },
  { field: 'Longitude', icon: SigmaIcon },
  { field: 'Nome' },
  { field: 'Profissão' },
  { table: 'Número de livros vendidos' },
  { table: 'Vendas por semana' },
];

function DataPane() {
  return (
    <aside className="flex w-[210px] shrink-0 flex-col bg-[#f3f2f1] text-[11px] text-[#3b3a39]">
      <div className="flex h-10 items-center justify-between pr-[3px] pb-0.5 pl-2">
        <h2 className="text-[15px] font-semibold text-[#252423]">Dados</h2>
        <button aria-label="Recolher dados"><Chevrons /></button>
      </div>
      <label className="mt-[5px] ml-1 flex h-[27px] items-center gap-1.5 rounded-[2px] border border-[#797775] pl-[7px]">
        <Svg w={15} h={15}>
          <circle cx="9.5" cy="5.5" r="4.7" stroke="#605e5c" />
          <path d="M6 9L.7 14.300" stroke="#605e5c" />
        </Svg>
        <input
          type="search"
          aria-label="Pesquisar"
          placeholder="Pesquisar"
          className="w-full min-w-0 bg-transparent text-[13px] outline-none placeholder:text-[#484644]"
        />
      </label>
      <ul className="pt-[9px]">
        {TREE.map((n) =>
          n.table ? (
            <li key={n.table} className="flex h-6 items-center pl-[13px]">
              <button className="flex items-center whitespace-nowrap">
                <Arrow open={n.open} />
                <span className="ml-1 flex">{TableIcon}</span>
                <span className="ml-1.5 pt-px">{n.table}</span>
              </button>
            </li>
          ) : (
            <li key={n.field} className="flex h-6 items-center pl-7">
              <span className="flex w-4">{n.arrow && <Arrow />}</span>
              <label className="flex items-center">
                <input type="checkbox" className="size-3 appearance-none rounded-[2px] border border-[#797775]" />
                <span className="ml-2 flex w-[18px]">{n.icon}</span>
                <span className="pt-px">{n.field}</span>
              </label>
            </li>
          )
        )}
      </ul>
    </aside>
  );
}

/* ---------- Page tabs and status bar ---------- */

function PageTabs() {
  return (
    <div className="flex h-[35px] shrink-0 items-start bg-[#f3f2f1] text-[12px] text-[#252423]">
      <button aria-label="Layout da área de trabalho" className="mt-1.5 ml-2.5 flex w-6 flex-col items-center gap-1.5">
        <Svg w={20} h={15}>
          <path d="M.7 1.500h18.600v10H.7zM7 14.300h6M10 11.500v3" stroke="#605e5c" strokeWidth="1.4" />
        </Svg>
        <span className="h-[3px] w-6 rounded-full bg-[#117865]" />
      </button>
      <button aria-label="Layout móvel" className="mt-[5px] ml-[25px]">
        <Svg w={14} h={21}>
          <rect x=".8" y=".8" width="12" height="19" rx="1" stroke="#605e5c" strokeWidth="1.4" />
          <path d="M5.500 17h3" stroke="#605e5c" strokeWidth="1.5" />
        </Svg>
      </button>
      <button aria-label="Página anterior" className="mt-[13px] ml-5">
        <Svg w={6} h={10}><path d="M5 1v8L1 5z" fill="#c8c6c4" /></Svg>
      </button>
      <button aria-label="Próxima página" className="mt-[13px] ml-4">
        <Svg w={6} h={10}><path d="M1 1v8l4-4z" fill="#c8c6c4" /></Svg>
      </button>
      <button className="ml-[6px] h-[35px] w-[87px] border-x border-b-3 border-x-[#a19f9d] border-b-[#117865] bg-white pt-1.5 font-medium">
        Página 1
      </button>
      <button aria-label="Nova página" className="mt-[2px] flex h-8 w-[39px] items-center justify-center bg-[#117865]">
        <Svg w={12} h={12}><path d="M6 .5v11M.5 6h11" stroke="#fff" strokeWidth="2.4" /></Svg>
      </button>
    </div>
  );
}

function StatusBar() {
  return (
    <footer className="flex h-[22px] shrink-0 items-center justify-between border-t border-[#e1dfdd] bg-[#f3f2f1] pt-1 pr-[15px] pl-1 text-[12px] text-[#484644]">
      <span>Página 1 de 1</span>
      <div className="flex items-center">
        <button aria-label="Reduzir" className="flex"><Svg w={6} h={10}><path d="M1 5.500h4" stroke="#484644" strokeWidth="1.5" /></Svg></button>
        <span className="ml-1 grid w-[100px] items-center">
          <input
            type="range"
            aria-label="Zoom"
            min="0"
            max="100"
            defaultValue="32"
            className="col-start-1 row-start-1 h-3 w-full appearance-none bg-[linear-gradient(#605e5c,#605e5c)] bg-[length:100%_1px] bg-center bg-no-repeat [&::-webkit-slider-thumb]:h-[11px] [&::-webkit-slider-thumb]:w-1 [&::-webkit-slider-thumb]:appearance-none [&::-webkit-slider-thumb]:bg-[#484644]"
          />
          <span className="pointer-events-none col-start-1 row-start-1 h-[5px] w-px justify-self-center bg-[#605e5c]" />
        </span>
        <button aria-label="Ampliar" className="ml-1.5 flex"><Svg w={8} h={8}><path d="M4.500 0v8M.5 4.500h8" stroke="#605e5c" /></Svg></button>
        <span className="ml-3 w-[30px] text-[11px]">69%</span>
        <button aria-label="Ajustar à página" className="ml-3 flex">
          <Svg w={16} h={12}>
            <path d="M.5 .5h15v11H.5z" stroke="#605e5c" />
            <path d="M3 5V3h2.500M10.500 3H13v2M13 7.500V9.500h-2.500M5.500 9.500H3v-2" stroke="#5c9e5c" />
          </Svg>
        </button>
      </div>
    </footer>
  );
}

export default function App() {
  return (
    <div className="flex min-h-screen flex-col overflow-hidden bg-[#f3f2f1] font-['Open_Sans','Noto_Sans',sans-serif]">
      <TitleBar />
      <Ribbon />
      <div className="flex flex-1">
        <LeftNav />
        <div className="flex min-w-0 flex-1 flex-col">
          <div className="flex flex-1">
            <Canvas />
            <FiltersStrip />
          </div>
          <PageTabs />
        </div>
        <VisualizationsPane />
        <DataPane />
      </div>
      <StatusBar />
    </div>
  );
}
